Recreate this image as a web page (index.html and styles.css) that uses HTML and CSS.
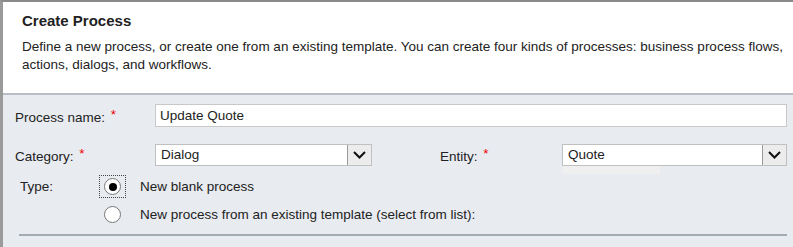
FILE: index.html
```html
<!DOCTYPE html>
<html lang="en">
<head>
    <meta charset="UTF-8">
    <title>Create Process</title>
    <link rel="stylesheet" href="styles.css">
</head>
<body>
    <div class="dialog">
        <div class="header">
            <h1>Create Process</h1>
            <p>Define a new process, or create one from an existing template. You can create four kinds of processes: business process flows, actions, dialogs, and workflows.</p>
        </div>
        <div class="form">
            <div class="row">
                <label class="label">Process name: <span class="req">*</span></label>
                <div class="textbox">Update Quote</div>
            </div>
            <div class="row">
                <label class="label">Category: <span class="req">*</span></label>
                <div class="select category">
                    <span class="value">Dialog</span>
                    <span class="arrow"><svg width="13" height="8" viewBox="0 0 13 8"><path d="M1 1 L6.5 6.5 L12 1" fill="none" stroke="#111" stroke-width="2"/></svg></span>
                </div>
                <label class="label entity-label">Entity: <span class="req">*</span></label>
                <div class="entity-wrap">
                    <div class="select entity">
                        <span class="value">Quote</span>
                        <span class="arrow"><svg width="13" height="8" viewBox="0 0 13 8"><path d="M1 1 L6.5 6.5 L12 1" fill="none" stroke="#111" stroke-width="2"/></svg></span>
                    </div>
                    <div class="ghost"></div>
                </div>
            </div>
            <div class="type-row">
                <span class="type-label">Type:</span>
                <div class="options">
                    <div class="option">
                        <span class="focus"><span class="radio checked"></span></span>
                        <span>New blank process</span>
                    </div>
                    <div class="option">
                        <span class="focus blank"><span class="radio"></span></span>
                        <span>New process from an existing template (select from list):</span>
                    </div>
                </div>
            </div>
            <div class="rule"></div>
        </div>
    </div>
</body>
</html>
```

FILE: styles.css
```css
body {
    margin: 0;
    font-family: "Liberation Sans", Arial, sans-serif;
    color: #222;
    overflow: hidden;
}
.dialog {
    width: 793px;
    height: 247px;
    border-top: 2px solid #8a8a8a;
    border-left: 3px solid #9a9a9a;
    box-sizing: border-box;
    background: #e8ebf0;
}
.header {
    background: #fff;
    height: 93px;
    padding: 8px 0 0 19px;
    box-sizing: border-box;
    border-bottom: 2px solid #b9bec4;
}
.header h1 {
    margin: 0;
    font-size: 15px;
    font-weight: bold;
    line-height: 22px;
    color: #222;
}
.header p {
    margin: 6px 0 0;
    font-size: 13.5px;
    line-height: 18px;
    padding-right: 8px;
}
.form {
    padding: 9px 6px 0 12px;
    font-size: 13.5px;
}
.row {
    display: flex;
    align-items: center;
    height: 23px;
    margin-bottom: 16px;
}
.label {
    width: 140px;
    flex: none;
}
.req {
    color: #e00;
    margin-left: 2px;
    vertical-align: 3px;
}
.textbox {
    flex: 1;
    height: 23px;
    box-sizing: border-box;
    border: 1px solid #c8c8c8;
    background: #fff;
    padding: 1px 4px;
    line-height: 19px;
}
.select {
    display: flex;
    height: 22px;
    box-sizing: border-box;
    border: 1px solid #c0c0c0;
    background: #fff;
}
.select .value {
    flex: 1;
    padding: 0 5px;
    line-height: 20px;
}
.select .arrow {
    width: 23px;
    border-left: 1px solid #9a9a9a;
    background: #ececec;
    display: flex;
    align-items: center;
    justify-content: center;
}
.category {
    width: 217px;
}
.entity-label {
    width: auto;
    margin-left: 68px;
    flex: 1;
}
.entity-wrap {
    width: 225px;
    position: relative;
}
.entity {
    width: 225px;
}
.ghost {
    position: absolute;
    left: 0;
    top: 22px;
    width: 98px;
    height: 8px;
    background: #efefef;
}
.type-row {
    display: flex;
    margin-top: -7px;
}
.type-label {
    width: 79px;
    padding-left: 5px;
    line-height: 23px;
}
.option {
    display: flex;
    align-items: center;
    height: 23px;
    margin-bottom: 5px;
}
.focus {
    width: 27px;
    height: 23px;
    box-sizing: border-box;
    border: 1px dotted #444;
    display: flex;
    align-items: center;
    justify-content: center;
    margin-right: 14px;
}
.focus.blank {
    border-color: transparent;
}
.radio {
    width: 17px;
    height: 17px;
    box-sizing: border-box;
    border: 1px solid #777;
    border-radius: 50%;
    background: #fff;
    display: flex;
    align-items: center;
    justify-content: center;
}
.radio.checked::after {
    content: "";
    width: 8px;
    height: 8px;
    border-radius: 50%;
    background: #000;
}
.rule {
    border-top: 2px solid #a3abb3;
    margin: 3px 0 0 4px;
}
```
